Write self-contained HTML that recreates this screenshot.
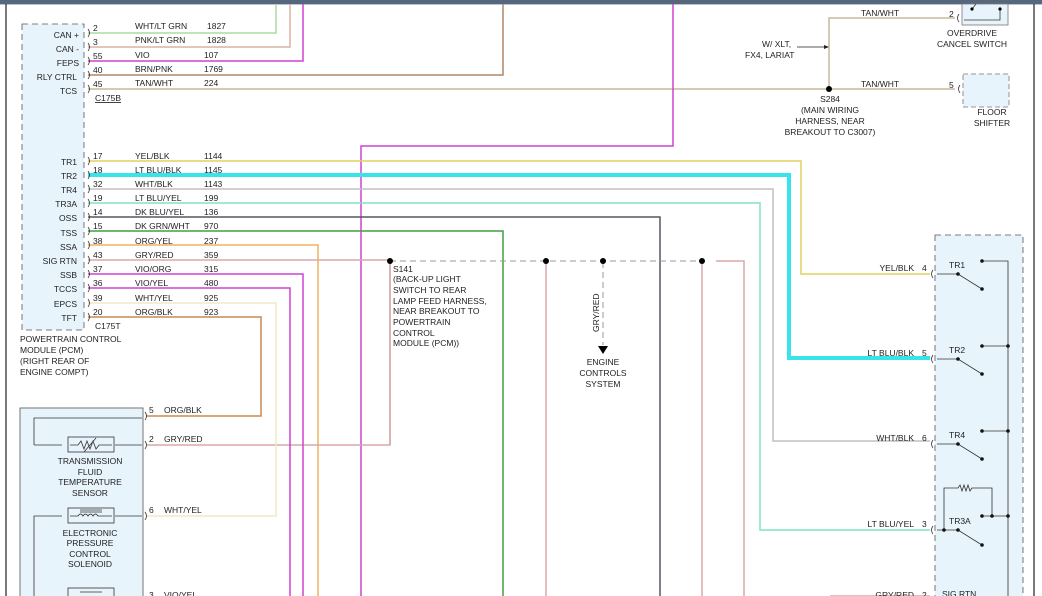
<!DOCTYPE html>
<html><head><meta charset="utf-8"><style>
html,body{margin:0;padding:0;background:#fff;}
svg{display:block}
text{font-family:"Liberation Sans",sans-serif;font-size:8.5px;fill:#222;}
</style></head><body>
<svg width="1042" height="596" viewBox="0 0 1042 596" xmlns="http://www.w3.org/2000/svg">
<rect x="0" y="0" width="1042" height="4" fill="#56677d"/>
<line x1="0" y1="4.5" x2="1042" y2="4.5" stroke="#b8c4d0" stroke-width="1"/>
<line x1="6" y1="4" x2="6" y2="596" stroke="#222" stroke-width="1.2"/>
<line x1="1034" y1="4" x2="1034" y2="596" stroke="#222" stroke-width="1.2"/>

<!-- PCM box -->
<rect x="22" y="24" width="62" height="306" fill="#e8f4fc"/>
<rect x="22" y="24" width="62" height="306" fill="none" stroke="#555" stroke-width="0.8" stroke-dasharray="6,4"/>

<g fill="none" stroke-width="1.5">
<path d="M88 33 H276 V4" stroke="#a8dca0"/>
<path d="M88 47 H290 V4" stroke="#d8b4a8"/>
<path d="M88 61 H303 V4" stroke="#d040d0"/>
<path d="M88 75 H503 V4" stroke="#b08868"/>
<path d="M88 89 H955" stroke="#c8b898"/>
<path d="M829 89 V18 H955" stroke="#c8b898"/>
<path d="M673 4 V146 H361 V596" stroke="#d040d0"/>
<path d="M88 161 H801 V274 H930" stroke="#e0d060"/>
<path d="M88 175 H789 V358 H930" stroke="#38e4ec" stroke-width="4"/>
<path d="M88 189 H773 V441 H930" stroke="#c0c0c0"/>
<path d="M88 203 H760 V530 H930" stroke="#80e4c0"/>
<path d="M88 217 H660 V596" stroke="#505860"/>
<path d="M88 231 H503 V596" stroke="#40a040"/>
<path d="M88 245 H318 V596" stroke="#f0b060"/>
<path d="M88 260 H390 V445 H146" stroke="#d8a8a8"/>
<path d="M88 274 H303 V596" stroke="#d040d0"/>
<path d="M88 288 H290 V596" stroke="#d040d0"/>
<path d="M88 303 H276 V516 H146" stroke="#f0e8c8"/>
<path d="M88 317 H261 V416 H146" stroke="#c88850"/>
<path d="M546 262 V596" stroke="#d8a8a8"/>
<path d="M702 262 V596" stroke="#d8a8a8"/>
<path d="M716 261 H744 V596" stroke="#d8a8a8"/>
<path d="M390 262 V445" stroke="#d8a8a8"/>
<path d="M390 261 H702" stroke="#999" stroke-width="1" stroke-dasharray="6,4"/>
<path d="M603 262 V345" stroke="#999" stroke-width="1" stroke-dasharray="6,4"/>
<path d="M830 596 H930" stroke="#d8a8a8"/>
</g>
<g fill="none" stroke="#333" stroke-width="0.8">
<path d="M88 29 Q91 33 88 37 M88 43 Q91 47 88 51 M88 57 Q91 61 88 65 M88 71 Q91 75 88 79 M88 85 Q91 89 88 93 M88 157 Q91 161 88 165 M88 171 Q91 175 88 179 M88 185 Q91 189 88 193 M88 199 Q91 203 88 207 M88 213 Q91 217 88 221 M88 227 Q91 231 88 235 M88 241 Q91 245 88 249 M88 256 Q91 260 88 264 M88 270 Q91 274 88 278 M88 284 Q91 288 88 292 M88 299 Q91 303 88 307 M88 313 Q91 317 88 321"/>
</g>
<g fill="#000">
<circle cx="390" cy="261" r="3"/><circle cx="546" cy="261" r="3"/><circle cx="603" cy="261" r="3"/><circle cx="702" cy="261" r="3"/>
<circle cx="829" cy="89" r="3"/>
<path d="M598 346 H608 L603 354 Z"/>
</g>

<!-- PCM labels -->
<g text-anchor="end">
<text x="79" y="38">CAN +</text><text x="79" y="52">CAN -</text><text x="79" y="66">FEPS</text><text x="77" y="80">RLY CTRL</text><text x="77" y="94">TCS</text>
<text x="77" y="165">TR1</text><text x="77" y="179">TR2</text><text x="77" y="193">TR4</text><text x="77" y="207">TR3A</text><text x="77" y="221">OSS</text><text x="77" y="236">TSS</text><text x="77" y="250">SSA</text><text x="77" y="264">SIG RTN</text><text x="77" y="278">SSB</text><text x="77" y="292">TCCS</text><text x="77" y="307">EPCS</text><text x="77" y="321">TFT</text>
</g>
<g>
<text x="93" y="31">2</text><text x="135" y="29">WHT/LT GRN</text><text x="207" y="29">1827</text>
<text x="93" y="45">3</text><text x="135" y="43">PNK/LT GRN</text><text x="207" y="43">1828</text>
<text x="93" y="59">55</text><text x="135" y="58">VIO</text><text x="204" y="58">107</text>
<text x="93" y="73">40</text><text x="135" y="72">BRN/PNK</text><text x="204" y="72">1769</text>
<text x="93" y="87">45</text><text x="135" y="86">TAN/WHT</text><text x="204" y="86">224</text>
<text x="95" y="101" text-decoration="underline">C175B</text>
<text x="93" y="159">17</text><text x="135" y="159">YEL/BLK</text><text x="204" y="159">1144</text>
<text x="93" y="173">18</text><text x="135" y="173">LT BLU/BLK</text><text x="204" y="173">1145</text>
<text x="93" y="187">32</text><text x="135" y="187">WHT/BLK</text><text x="204" y="187">1143</text>
<text x="93" y="201">19</text><text x="135" y="201">LT BLU/YEL</text><text x="204" y="201">199</text>
<text x="93" y="215">14</text><text x="135" y="215">DK BLU/YEL</text><text x="204" y="215">136</text>
<text x="93" y="229">15</text><text x="135" y="229">DK GRN/WHT</text><text x="204" y="229">970</text>
<text x="93" y="244">38</text><text x="135" y="244">ORG/YEL</text><text x="204" y="244">237</text>
<text x="93" y="258">43</text><text x="135" y="258">GRY/RED</text><text x="204" y="258">359</text>
<text x="93" y="272">37</text><text x="135" y="272">VIO/ORG</text><text x="204" y="272">315</text>
<text x="93" y="286">36</text><text x="135" y="286">VIO/YEL</text><text x="204" y="286">480</text>
<text x="93" y="301">39</text><text x="135" y="301">WHT/YEL</text><text x="204" y="301">925</text>
<text x="93" y="315">20</text><text x="135" y="315">ORG/BLK</text><text x="204" y="315">923</text>
<text x="95" y="329">C175T</text>
<text x="20" y="342">POWERTRAIN CONTROL</text><text x="20" y="353">MODULE (PCM)</text><text x="20" y="364">(RIGHT REAR OF</text><text x="20" y="375">ENGINE COMPT)</text>
</g>

<!-- S141 -->
<g>
<text x="393" y="272">S141</text><text x="393" y="282">(BACK-UP LIGHT</text><text x="393" y="293">SWITCH TO REAR</text><text x="393" y="304">LAMP FEED HARNESS,</text><text x="393" y="314">NEAR BREAKOUT TO</text><text x="393" y="325">POWERTRAIN</text><text x="393" y="336">CONTROL</text><text x="393" y="346">MODULE (PCM))</text>
<text transform="translate(599,332) rotate(-90)">GRY/RED</text>
<g text-anchor="middle"><text x="603" y="365">ENGINE</text><text x="603" y="376">CONTROLS</text><text x="603" y="387">SYSTEM</text></g>
</g>

<!-- top right -->
<g>
<text x="861" y="16">TAN/WHT</text><text x="861" y="87">TAN/WHT</text>
<text x="949" y="17">2</text><text x="949" y="88">5</text>
<text x="762" y="47">W/ XLT,</text><text x="745" y="58">FX4, LARIAT</text>
<g text-anchor="middle"><text x="830" y="102">S284</text><text x="830" y="113">(MAIN WIRING</text><text x="830" y="124">HARNESS, NEAR</text><text x="830" y="135">BREAKOUT TO C3007)</text>
<text x="972" y="36">OVERDRIVE</text><text x="972" y="47">CANCEL SWITCH</text>
<text x="992" y="115">FLOOR</text><text x="992" y="126">SHIFTER</text></g>
</g>
<line x1="797" y1="47" x2="826" y2="47" stroke="#222" stroke-width="0.8"/>
<path d="M824 45 L829 47 L824 49Z" fill="#222"/>
<rect x="962" y="4" width="46" height="21" fill="#e8f4fc" stroke="#777" stroke-width="0.8"/>
<path d="M964 20 H1000 V9 M972 9 L976 4" fill="none" stroke="#333" stroke-width="0.8"/>
<circle cx="972" cy="9" r="1.6"/><circle cx="1000" cy="9" r="1.6"/>
<path d="M959 14 Q956 18 959 22" fill="none" stroke="#333" stroke-width="0.8"/>
<rect x="963" y="74" width="46" height="33" fill="#e8f4fc" stroke="#777" stroke-width="0.8" stroke-dasharray="5,3"/>
<path d="M960 85 Q957 89 960 93" fill="none" stroke="#333" stroke-width="0.8"/>

<!-- sensor box -->
<rect x="20" y="408" width="123" height="190" fill="#e8f4fc" stroke="#666" stroke-width="0.9"/>
<g fill="none" stroke="#333" stroke-width="0.8">
<path d="M34 445 V418 H142"/>
<path d="M34 445 H62 M115 445 H142"/>
<rect x="68" y="437" width="46" height="15"/>
<path d="M70 445 H78 L81 441 L84 449 L87 441 L90 449 L93 441 L96 449 L99 445 H112 M84 452 L96 438"/>
<path d="M34 596 V516 H62 M115 516 H142"/>
<rect x="68" y="508" width="46" height="15"/>
<path d="M70 516 H78 q2.5 -4 5 0 q2.5 -4 5 0 q2.5 -4 5 0 q2.5 -4 5 0 H112 M80 512 H102 M80 510 H102"/>
<rect x="68" y="588" width="46" height="15"/>
<path d="M80 592 H102"/>
<path d="M145 412 Q148 416 145 420 M145 441 Q148 445 145 449 M145 512 Q148 516 145 520"/>
</g>
<g text-anchor="middle"><text x="90" y="464">TRANSMISSION</text><text x="90" y="475">FLUID</text><text x="90" y="485">TEMPERATURE</text><text x="90" y="496">SENSOR</text>
<text x="90" y="536">ELECTRONIC</text><text x="90" y="546">PRESSURE</text><text x="90" y="557">CONTROL</text><text x="90" y="567">SOLENOID</text></g>
<text x="149" y="413">5</text><text x="164" y="413">ORG/BLK</text>
<text x="149" y="442">2</text><text x="164" y="442">GRY/RED</text>
<text x="149" y="513">6</text><text x="164" y="513">WHT/YEL</text>
<text x="149" y="598">3</text><text x="164" y="598">VIO/YEL</text>

<!-- right box -->
<rect x="935" y="235" width="88" height="370" fill="#e8f4fc"/>
<rect x="935" y="235" width="88" height="370" fill="none" stroke="#555" stroke-width="0.8" stroke-dasharray="6,4"/>
<g fill="none" stroke="#333" stroke-width="0.8">
<path d="M982 261 H1008 V596"/>
<path d="M982 346 H1008 M982 431 H1008 M982 516 H1008"/>
<path d="M937 274 H958 L982 289 M937 359 H958 L982 374 M937 444 H958 L982 459 M937 530 H958 L982 545"/>
<path d="M944 530 V488 H958 l2 -3 l2 6 l2 -6 l2 6 l2 -6 l2 6 l2 -3 H992 V516"/>
<path d="M933 270 Q930 274 933 278 M933 355 Q930 359 933 363 M933 440 Q930 444 933 448 M933 526 Q930 530 933 534"/>
</g>
<g fill="#111">
<circle cx="982" cy="261" r="1.8"/><circle cx="982" cy="289" r="1.8"/><circle cx="958" cy="274" r="1.8"/>
<circle cx="982" cy="346" r="1.8"/><circle cx="1008" cy="346" r="1.8"/><circle cx="982" cy="374" r="1.8"/><circle cx="958" cy="359" r="1.8"/>
<circle cx="982" cy="431" r="1.8"/><circle cx="1008" cy="431" r="1.8"/><circle cx="982" cy="459" r="1.8"/><circle cx="958" cy="444" r="1.8"/>
<circle cx="982" cy="516" r="1.8"/><circle cx="992" cy="516" r="1.8"/><circle cx="1008" cy="516" r="1.8"/><circle cx="982" cy="545" r="1.8"/><circle cx="958" cy="530" r="1.8"/><circle cx="944" cy="530" r="1.8"/>
</g>
<g text-anchor="end"><text x="914" y="271">YEL/BLK</text><text x="914" y="356">LT BLU/BLK</text><text x="914" y="441">WHT/BLK</text><text x="914" y="527">LT BLU/YEL</text><text x="914" y="598">GRY/RED</text></g>
<text x="922" y="271">4</text><text x="922" y="356">5</text><text x="922" y="441">6</text><text x="922" y="527">3</text><text x="922" y="598">2</text>
<text x="949" y="268">TR1</text><text x="949" y="353">TR2</text><text x="949" y="438">TR4</text><text x="949" y="524">TR3A</text><text x="942" y="597">SIG RTN</text>
</svg>
</body></html>
